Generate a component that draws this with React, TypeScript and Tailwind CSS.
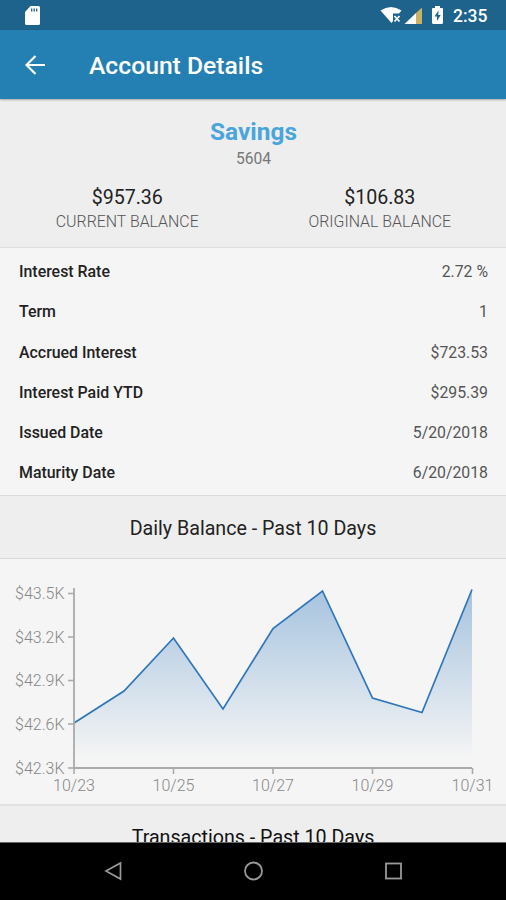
import React from "react";

const details: [string, string][] = [
  ["Interest Rate", "2.72 %"],
  ["Term", "1"],
  ["Accrued Interest", "$723.53"],
  ["Interest Paid YTD", "$295.39"],
  ["Issued Date", "5/20/2018"],
  ["Maturity Date", "6/20/2018"],
];

const yTicks: [string, number][] = [
  ["$43.5K", 34.5],
  ["$43.2K", 78],
  ["$42.9K", 121.5],
  ["$42.6K", 165],
  ["$42.3K", 209],
];

const xTicks: [string, number][] = [
  ["10/23", 74],
  ["10/25", 173.5],
  ["10/27", 273],
  ["10/29", 372.5],
  ["10/31", 472.5],
];

const line = "74,164 124,132 173.5,79 223,150 273,69.5 322.5,32 372.5,139 422,153.5 472,30.5";

function StatusBar() {
  return (
    <div className="flex h-[30px] shrink-0 items-center bg-[#1e638c] pl-[25px] pr-[17px] text-white">
      <svg width="15" height="19" viewBox="0 0 15 19">
        <path d="M5.5 0H13.5Q15 0 15 1.5V17.5Q15 19 13.5 19H1.5Q0 19 0 17.5V6Z" fill="#fff" />
        <path d="M6.7 2.5v3M9.2 2.5v3M11.7 2.5v3" stroke="#1e638c" strokeWidth="1.3" />
      </svg>
      <svg className="ml-auto" width="64" height="20" viewBox="0 0 64 20">
        <path d="M0.5 5.5Q11 -1.5 21.500 5.500L19 8.500H13V16L11.500 18Z" fill="#fff" />
        <path d="M14.500 11L19.500 16.500M19.500 11L14.500 16.500" stroke="#fff" strokeWidth="1.700" />
        <path d="M24.500 19L36 8V19Z" fill="#fff" />
        <path d="M36 8L42 2.500V19H36Z" fill="#cbb167" />
        <path d="M55 1H60V3H62Q63 3 63 4V17.500Q63 19 61.500 19H53.500Q52 19 52 17.500V4Q52 3 53 3H55Z" fill="#fff" />
        <path d="M58.500 5.500L54.500 11.500H57V16L60.700 10H58.300Z" fill="#1e638c" />
      </svg>
      <span className="ml-[9px] mt-[2px] w-[36px] whitespace-nowrap text-[17.5px] font-medium leading-5">2:35</span>
    </div>
  );
}

function SummaryAmount({ amount, label }: { amount: string; label: string }) {
  return (
    <div className="flex flex-1 flex-col items-center">
      <span className="text-[19.6px] leading-6 text-[#222]">{amount}</span>
      <span className="text-[15.9px] font-light leading-6 text-[#555]">{label}</span>
    </div>
  );
}

function BalanceChart() {
  return (
    <svg className="block" width="506" height="245" viewBox="0 0 506 245">
      <defs>
        <linearGradient id="balance" x1="0" y1="31" x2="0" y2="209" gradientUnits="userSpaceOnUse">
          <stop offset="0" stopColor="#2673ba" stopOpacity=".38" />
          <stop offset=".95" stopColor="#2673ba" stopOpacity="0" />
        </linearGradient>
      </defs>
      <polygon points={`${line} 472,209 74,209`} fill="url(#balance)" />
      <polyline points={line} fill="none" stroke="#2e76bb" strokeWidth="1.7" />
      <path d="M74 29V209H472" fill="none" stroke="#aaa" strokeWidth="1.800" />
      {yTicks.map(([label, y]) => (
        <g key={label}>
          <path d={`M68 ${y}H74`} stroke="#aaa" strokeWidth="1.6" />
          <text x="64.500" y={y + 5.8} textAnchor="end" fontSize="16" fontWeight="300" fill="#888">{label}</text>
        </g>
      ))}
      {xTicks.map(([label, x]) => (
        <g key={label}>
          <path d={`M${x} 209V215`} stroke="#aaa" strokeWidth="1.6" />
          <text x={x} y="232" textAnchor="middle" fontSize="16" fontWeight="300" fill="#888">{label}</text>
        </g>
      ))}
    </svg>
  );
}

export default function App() {
  return (
    <div className="flex h-[900px] w-[506px] flex-col overflow-hidden bg-[#f5f5f5] font-['Roboto',sans-serif]">
      <StatusBar />
      <header className="z-10 flex h-[69px] shrink-0 items-center bg-[#247fb3] pl-[25px] text-white shadow-[0_1px_2px_rgba(0,0,0,0.3)]">
        <svg width="20" height="20" viewBox="0 0 20 20" fill="none" stroke="#fff" strokeWidth="2.200">
          <path d="M20 10H2M10.500 1L1.500 10L10.500 19" />
        </svg>
        <h1 className="ml-[44px] mt-[2px] whitespace-nowrap text-[24.7px] font-medium leading-8">Account Details</h1>
      </header>
      <section className="flex h-[149px] shrink-0 flex-col items-center border-b border-[#dedede] bg-[#eee] pl-px pt-[18px]">
        <h2 className="text-[24.4px] font-bold leading-[30px] text-[#4aa5db]">Savings</h2>
        <span className="text-[15.6px] leading-6 text-[#777]">5604</span>
        <div className="mt-[15px] flex w-full">
          <SummaryAmount amount="$957.36" label="CURRENT BALANCE" />
          <SummaryAmount amount="$106.83" label="ORIGINAL BALANCE" />
        </div>
      </section>
      <section className="h-[247px] shrink-0 pl-[19px] pr-[18px] pt-[4px]">
        {details.map(([label, value]) => (
          <div key={label} className="flex h-[40.200px] items-center justify-between">
            <span className="text-[15.9px] font-medium text-[#222]">{label}</span>
            <span className="text-[15.8px] text-[#555]">{value}</span>
          </div>
        ))}
      </section>
      <h3 className="flex h-[64px] shrink-0 items-center justify-center border-y border-[#d9d9d9] bg-[#eee] pt-[4px] text-[19.65px] text-[#222]">
        Daily Balance - Past 10 Days
      </h3>
      <section className="h-[245px] shrink-0">
        <BalanceChart />
      </section>
      <h3 className="flex h-[38px] shrink-0 items-start justify-center overflow-hidden border-t-2 border-[#e2e2e2] bg-[#eee] pt-[20px] text-[19.65px] leading-6 text-[#111]">
        Transactions - Past 10 Days
      </h3>
      <nav className="flex h-[58px] shrink-0 items-center justify-center gap-[120px] border-t border-[#666] bg-black pb-px">
        <svg width="20" height="20" viewBox="0 0 20 20" fill="none" stroke="#999" strokeWidth="1.700">
          <path d="M17.500 2V18L3 10Z" />
        </svg>
        <svg width="20" height="20" viewBox="0 0 20 20" fill="none" stroke="#999" strokeWidth="1.800">
          <circle cx="10.500" cy="10" r="8.500" />
        </svg>
        <svg width="20" height="20" viewBox="0 0 20 20" fill="none" stroke="#999" strokeWidth="1.800">
          <rect x="3" y="2.500" width="15" height="15" />
        </svg>
      </nav>
    </div>
  );
}
